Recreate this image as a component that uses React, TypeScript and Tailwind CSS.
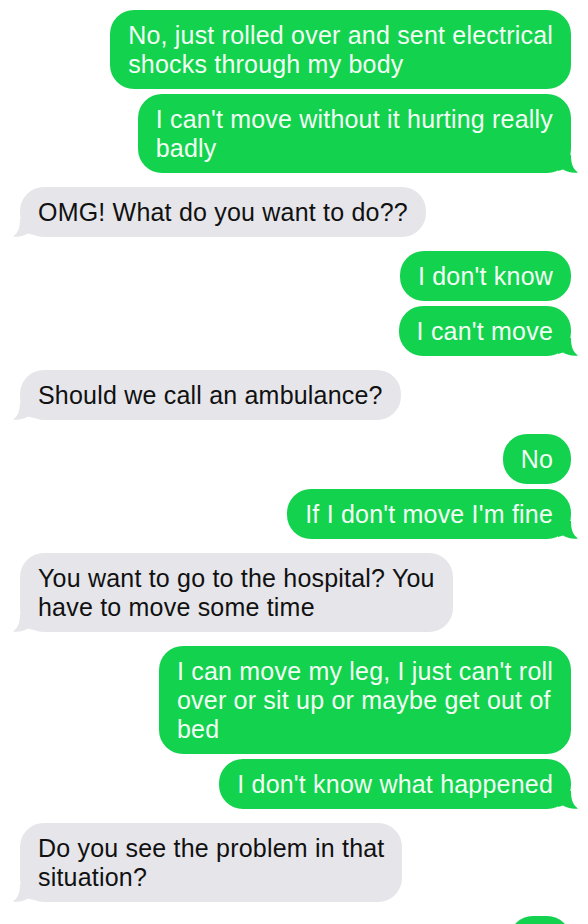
import React from "react";

type Msg = { from: "me" | "them"; lines: string[] };

const messages: Msg[] = [
  { from: "me", lines: ["No, just rolled over and sent electrical", "shocks through my body"] },
  { from: "me", lines: ["I can't move without it hurting really", "badly"] },
  { from: "them", lines: ["OMG! What do you want to do??"] },
  { from: "me", lines: ["I don't know"] },
  { from: "me", lines: ["I can't move"] },
  { from: "them", lines: ["Should we call an ambulance?"] },
  { from: "me", lines: ["No"] },
  { from: "me", lines: ["If I don't move I'm fine"] },
  { from: "them", lines: ["You want to go to the hospital? You", "have to move some time"] },
  { from: "me", lines: ["I can move my leg, I just can't roll", "over or sit up or maybe get out of", "bed"] },
  { from: "me", lines: ["I don't know what happened"] },
  { from: "them", lines: ["Do you see the problem in that", "situation?"] },
  // next message is cut off at the bottom edge, only its top shows
  { from: "me", lines: [] },
];

const Tail = ({ mine }: { mine: boolean }) => (
  <svg
    viewBox="0 0 20 18"
    className={
      mine
        ? "absolute right-[-7px] bottom-0 w-[20px] h-[18px]"
        : "absolute left-[-7px] bottom-0 w-[20px] h-[18px] -scale-x-100"
    }
  >
    <path
      d="M0 0 H13 C13 9 15 14 20 17.5 C14.5 18.2 8.5 17 5 14.5 L0 16 Z"
      fill={mine ? "#12d24e" : "#e5e5ea"}
    />
  </svg>
);

const Bubble = ({ msg, tail }: { msg: Msg; tail: boolean }) => {
  const mine = msg.from === "me";
  if (msg.lines.length === 0) {
    return (
      <div className="flex justify-end pr-[17px]">
        <div className="w-[62px] h-[50px] rounded-[24px] bg-[#12d24e]" />
      </div>
    );
  }
  return (
    <div className={mine ? "flex justify-end pr-[17px]" : "flex justify-start pl-[20px]"}>
      <div
        className={
          mine
            ? "relative rounded-[24px] bg-[#12d24e] text-[#f2fff4] px-[18px] py-[10.5px]"
            : "relative rounded-[24px] bg-[#e5e5ea] text-[#111111] px-[18px] py-[10.5px]"
        }
      >
        {tail && <Tail mine={mine} />}
        <div className="relative whitespace-nowrap text-[25px] leading-[29px] tracking-[0.2px]">
          {msg.lines.map((l, i) => (
            <div key={i}>{l}</div>
          ))}
        </div>
      </div>
    </div>
  );
};

export default function App() {
  return (
    <div
      className="h-[924px] w-full overflow-hidden bg-white pt-[10px]"
      style={{ fontFamily: '"Liberation Sans", Arial, sans-serif' }}
    >
      {messages.map((m, i) => {
        const sameAsPrev = i > 0 && messages[i - 1].from === m.from;
        const last = i === messages.length - 1 || messages[i + 1].from !== m.from;
        return (
          <div key={i} className={i === 0 ? "" : sameAsPrev ? "mt-[5px]" : "mt-[14px]"}>
            <Bubble msg={m} tail={last} />
          </div>
        );
      })}
    </div>
  );
}
